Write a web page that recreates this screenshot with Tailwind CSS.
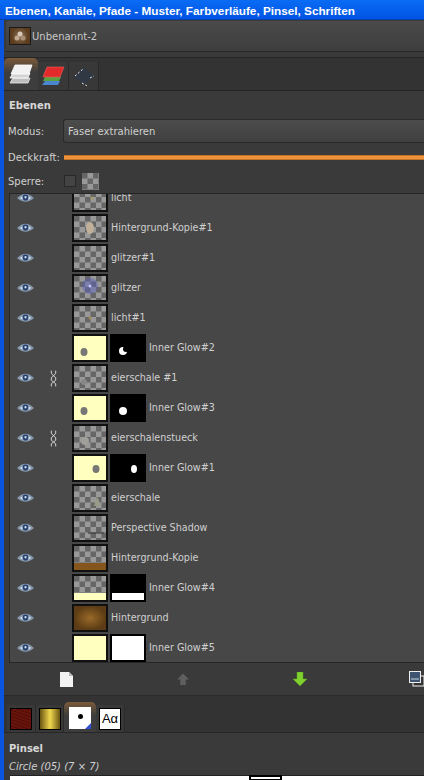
<!DOCTYPE html>
<html lang="de">
<head>
<meta charset="UTF-8">
<title>Ebenen</title>
<script src="https://cdn.jsdelivr.net/npm/@tailwindcss/browser@4"></script>
</head>
<body class="w-[424px] h-[780px] overflow-hidden bg-[#3a3a3a] font-['DejaVu_Sans',sans-serif] text-[10px] text-[#d0d0d0]">

<svg width="0" height="0" class="absolute">
  <defs>
    <pattern id="checks" width="11" height="11" patternUnits="userSpaceOnUse">
      <rect width="11" height="11" fill="#999"/>
      <rect width="5.5" height="5.5" fill="#666"/>
      <rect x="5.5" y="5.5" width="5.5" height="5.5" fill="#666"/>
    </pattern>
    <radialGradient id="brownGlow">
      <stop offset="0" stop-color="#9a6a2a"/>
      <stop offset="1" stop-color="#5c3c14"/>
    </radialGradient>
    <symbol id="eye" viewBox="0 0 18 12">
      <path d="M0 6 Q9 -3 18 6 Q9 14 0 6Z" fill="#8497ab"/>
      <path d="M3 6 Q9 1 15 6 Q9 10.5 3 6Z" fill="#dfe7f0"/>
      <circle cx="9" cy="5.6" r="3.2" fill="#27406e"/>
      <circle cx="9" cy="5.2" r="1.2" fill="#cfdcec"/>
    </symbol>
    <symbol id="chain" viewBox="0 0 8 20">
      <path d="M1.5 1 L1.5 4 L4 7 L6.5 4 L6.5 1 M4 7 L1.5 9 L1.5 12 L4 14 L6.5 12 L6.5 9 L4 7 M4 14 L1.5 16 L1.5 19 M4 14 L6.5 16 L6.5 19" fill="none" stroke="#d8d8d8" stroke-width="1.1"/>
    </symbol>
  </defs>
</svg>

<div class="flex h-full">
  <!-- xp window edge -->
  <div class="w-[4px] shrink-0 bg-[#0a55e0]"></div>

  <div class="flex-1 min-w-0 flex flex-col">
    <div class="h-[20px] shrink-0 -ml-[4px] pl-[5px] bg-[linear-gradient(#0a6cf5,#0054e3)] border-b border-[#0a3fae] font-['Liberation_Sans',sans-serif] font-bold text-[11.75px] leading-[22px] text-white whitespace-nowrap">Ebenen, Kanäle, Pfade - Muster, Farbverläufe, Pinsel, Schriften</div>

    <!-- image selector -->
    <div class="h-[31px] shrink-0 ml-[2px] mt-[1px] flex items-center gap-[1px] bg-[linear-gradient(#4a4a4a,#3e3e3e)] border-b border-[#262626] rounded-tl-[3px]">
      <div class="ml-[3px] w-[22px] h-[18px] border border-[#1a1a1a] bg-[radial-gradient(circle,#8a745e,#5c3c1c_70%)] flex items-center justify-center">
        <svg width="12" height="10" viewBox="0 0 12 10"><circle cx="6" cy="3" r="2.5" fill="#d8c8b8"/><circle cx="3" cy="7" r="2.5" fill="#c0a890"/><circle cx="9" cy="7" r="2.5" fill="#a89078"/></svg>
      </div>
      <span class="text-[#c8c8c8] text-[10px]">Unbenannt-2</span>
    </div>

    <!-- dock tabs -->
    <div class="h-[34px] shrink-0 mt-[5px] border-t border-b border-[#262626] bg-[#333] flex items-end">
      <div class="w-[34px] h-[32px] rounded-t-[5px] bg-[linear-gradient(#7a5a3a,#3d3d3d_45%)] flex items-center justify-center">
        <svg width="24" height="22" viewBox="0 0 24 22">
          <path d="M4 15 L21 15 L19 20 L1 20Z" fill="#bdbdbd" stroke="#eee" stroke-width=".8"/>
          <path d="M4 10 L21 10 L19 15 L1 15Z" fill="#d4d4d4" stroke="#fff" stroke-width=".8"/>
          <path d="M6 2 L23 2 L20 11 L2 11Z" fill="#f2f2f2" stroke="#fff" stroke-width=".8"/>
        </svg>
      </div>
      <div class="w-[31px] h-[28px] border-r border-[#2a2a2a] bg-[#383838] flex items-center justify-center">
        <svg width="24" height="22" viewBox="0 0 24 22">
          <path d="M4 16 L19 16 L17 20 L1 20Z" fill="#4a86d0"/>
          <path d="M4 12 L20 12 L18 16 L2 16Z" fill="#5aa040"/>
          <path d="M6 2 L23 2 L19 12 L2 12Z" fill="#e22a2a" stroke="#f06060" stroke-width=".6"/>
        </svg>
      </div>
      <div class="w-[30px] h-[28px] border-r border-[#2a2a2a] bg-[#383838] flex items-center justify-center">
        <svg width="22" height="20" viewBox="0 0 22 20">
          <path d="M1 11 L11 1 L21 10 L12 19Z" fill="#303844"/>
          <path d="M2 10 L10 3 M17 12 L21 10 M9 17 L14 20" stroke="#e8e8e8" stroke-width="1" stroke-dasharray="2 2"/>
        </svg>
      </div>
    </div>

    <!-- layers panel -->
    <div class="flex-1 min-h-0 flex flex-col bg-[#3a3a3a]">
      <div class="h-[20px] shrink-0 mt-[3px] pl-[5px] font-bold leading-[24px] text-[#d8d8d8]">Ebenen</div>

      <div class="h-[28px] shrink-0 mt-[3px] flex items-center pl-[4px]">
        <span class="w-[55px] shrink-0">Modus:</span>
        <div class="flex-1 h-[24px] flex items-center pl-[4px] rounded-l-[3px] border-y border-l border-[#2a2a2a] bg-[linear-gradient(#4c4c4c,#404040)]">Faser extrahieren</div>
      </div>

      <div class="h-[24px] shrink-0 flex items-center pl-[4px]">
        <span class="w-[56px] shrink-0">Deckkraft:</span>
        <div class="flex-1 h-[5px] bg-[#f0923a] border-y border-[#c07428]"></div>
      </div>

      <div class="h-[24px] shrink-0 flex items-center pl-[4px]">
        <span class="w-[56px] shrink-0">Sperre:</span>
        <div class="w-[12px] h-[12px] border border-[#282828] bg-[#444]"></div>
        <svg width="17" height="17" class="ml-[6px]"><rect width="17" height="17" fill="url(#checks)"/></svg>
      </div>

      <!-- layer list -->
      <div id="layers" class="ml-[5px] h-[470px] shrink-0 overflow-hidden border-t border-l border-b border-[#262626] bg-[#474747]"></div>

      <!-- list buttons -->
      <div class="h-[33px] shrink-0 flex items-center relative border-b border-[#2a2a2a]">
        <svg class="ml-[55px]" width="15" height="17" viewBox="0 0 15 17"><path d="M1 1 H10 L14 5 V16 H1Z" fill="#f2f2f2"/><path d="M10 1 L10 5 H14Z" fill="#b8b8b8"/></svg>
        <svg class="ml-[103px]" width="12" height="13" viewBox="0 0 13 13"><path d="M6.5 0 L13 6.5 H9.5 V12.5 H3.5 V6.5 H0Z" fill="#5f5f5f"/></svg>
        <svg class="ml-[104px]" width="14" height="14" viewBox="0 0 14 14"><path d="M7 14 L0 7 H4 V0 H10 V7 H14Z" fill="#7fcf2e" stroke="#5da51c" stroke-width=".5"/></svg>
        <svg class="absolute left-[405px] top-[8px]" width="16" height="16" viewBox="0 0 16 16"><rect x="4" y="5" width="11" height="10" fill="#333" stroke="#eee"/><rect x="0.5" y="0.5" width="11" height="11" fill="#3e5470" stroke="#eee"/><path d="M2 8 H10" stroke="#cdd6e0"/></svg>
      </div>

      <!-- bottom tabs -->
      <div class="h-[37px] shrink-0 bg-[#333] border-b border-[#262626] flex items-end">
        <div class="ml-[3px] w-[29px] h-[27px] border-r border-[#2a2a2a] bg-[#383838] flex items-center justify-center">
          <div class="w-[22px] h-[22px] border border-black bg-[repeating-linear-gradient(20deg,#5e1008_0px,#6e160c_2px,#420a05_3px)]"></div>
        </div>
        <div class="w-[28px] h-[27px] border-r border-[#2a2a2a] bg-[#383838] flex items-center justify-center">
          <div class="w-[22px] h-[22px] border border-black bg-[linear-gradient(90deg,#6a5510,#f0d850_50%,#6a5510)]"></div>
        </div>
        <div class="w-[32px] h-[30px] pt-[2px] rounded-t-[5px] bg-[linear-gradient(#7a5a3a,#3d3d3d_45%)] flex items-center justify-center">
          <div class="relative w-[22px] h-[22px] bg-white flex items-center justify-center">
            <div class="w-[5px] h-[5px] rounded-full bg-black -mt-[3px]"></div>
            <div class="absolute right-0 bottom-0 w-0 h-0 border-l-[6px] border-l-transparent border-b-[6px] border-b-[#3050d0]"></div>
          </div>
        </div>
        <div class="w-[29px] h-[27px] border-r border-[#2a2a2a] bg-[#383838] flex items-center justify-center">
          <div class="w-[22px] h-[22px] bg-white border border-black text-black font-['Liberation_Sans',sans-serif] text-[13px] leading-[20px] text-center">Aα</div>
        </div>
      </div>

      <div class="h-[19px] shrink-0 mt-[4px] pl-[5px] font-bold leading-[24px] text-[#d8d8d8]">Pinsel</div>
      <div class="h-[19px] shrink-0 pl-[5px] italic leading-[22px] text-[#d0d0d0]">Circle (05) (7 × 7)</div>
      <!-- brush grid, only its top edge is in view -->
      <div class="ml-[6px] h-[5px] shrink-0 border-t border-[#222] bg-white relative">
        <div class="absolute left-[239px] -top-[1px] w-[33px] h-[6px] border-2 border-black"></div>
      </div>
    </div>
  </div>
</div>

<script>
  // top to bottom as listed in the dock
  const layers = [
    { name: "licht", thumb: "checks", mark: '<circle cx="18" cy="12" r="1.5" fill="#a89a60"/>' },
    { name: "Hintergrund-Kopie#1", thumb: "checks", mark: '<ellipse cx="16" cy="12" rx="4" ry="6" fill="#c0b098"/>' },
    { name: "glitzer#1", thumb: "checks" },
    { name: "glitzer", thumb: "checks", mark: '<circle cx="16" cy="10" r="8" fill="#5a60c0" opacity=".45"/><circle cx="16" cy="10" r="1.5" fill="#c0c8ff"/>' },
    { name: "licht#1", thumb: "checks", mark: '<circle cx="16" cy="12" r="1.5" fill="#a08a50"/>' },
    { name: "Inner Glow#2", thumb: "cream", mark: '<ellipse cx="10" cy="16" rx="3.5" ry="4" fill="#777"/>', mask: '<circle cx="11" cy="15" r="4" fill="#fff"/><circle cx="14" cy="13" r="3" fill="#000"/>' },
    { name: "eierschale #1", thumb: "checks", linked: true, mark: '<circle cx="10" cy="16" r="3" fill="#888"/>' },
    { name: "Inner Glow#3", thumb: "cream", mark: '<ellipse cx="10" cy="15" rx="3.5" ry="4" fill="#777"/>', mask: '<circle cx="11" cy="15" r="4" fill="#fff"/>' },
    { name: "eierschalenstueck", thumb: "checks", linked: true, mark: '<circle cx="11" cy="15" r="4" fill="#a0a098"/>' },
    { name: "Inner Glow#1", thumb: "cream", mark: '<ellipse cx="22" cy="13" rx="3.5" ry="4" fill="#777"/>', mask: '<ellipse cx="22" cy="13" rx="3" ry="4" fill="#fff"/>' },
    { name: "eierschale", thumb: "checks", mark: '<path d="M23 10 L27 20 L20 20Z" fill="#9a9a88"/>' },
    { name: "Perspective Shadow", thumb: "checks", mark: '<path d="M14 17 H30" stroke="#333"/>' },
    { name: "Hintergrund-Kopie", thumb: "checks", mark: '<rect y="17" width="32" height="7" fill="#85561c"/>' },
    { name: "Inner Glow#4", thumb: "checks", mark: '<rect y="17" width="32" height="7" fill="#ffffc0"/>', mask: '<rect y="17" width="32" height="7" fill="#fff"/>' },
    { name: "Hintergrund", thumb: "brown" },
    { name: "Inner Glow#5", thumb: "cream", mask: '<rect width="32" height="24" fill="#fff"/>' }
  ];

  const fills = { checks: "url(#checks)", cream: "#ffffc0", brown: "url(#brownGlow)" };

  function createRow(layer) {
    const chain = layer.linked ? '<svg width="7" height="19"><use href="#chain"/></svg>' : '';
    const mask = layer.mask
      ? `<svg class="ml-[2px] shrink-0 border-2 border-black" width="36" height="28" viewBox="0 0 32 24"><rect width="32" height="24" fill="#000"/>${layer.mask}</svg>`
      : '';
    return `
      <div class="h-[30px] flex items-center">
        <svg class="ml-[7px] shrink-0" width="17" height="12"><use href="#eye"/></svg>
        <div class="ml-[16px] w-[7px] shrink-0 flex">${chain}</div>
        <svg class="ml-[15px] shrink-0 border-2 border-[#101010]" width="36" height="28" viewBox="0 0 32 24">
          <rect width="32" height="24" fill="${fills[layer.thumb]}"/>${layer.mark || ''}
        </svg>
        ${mask}
        <span class="ml-[3px] whitespace-nowrap text-[9.6px] text-[#d0d0d0]">${layer.name}</span>
      </div>`;
  }

  document.getElementById('layers').innerHTML = '<div class="-mt-[11px]">' + layers.map(createRow).join('') + '</div>';
</script>
</body>
</html>
